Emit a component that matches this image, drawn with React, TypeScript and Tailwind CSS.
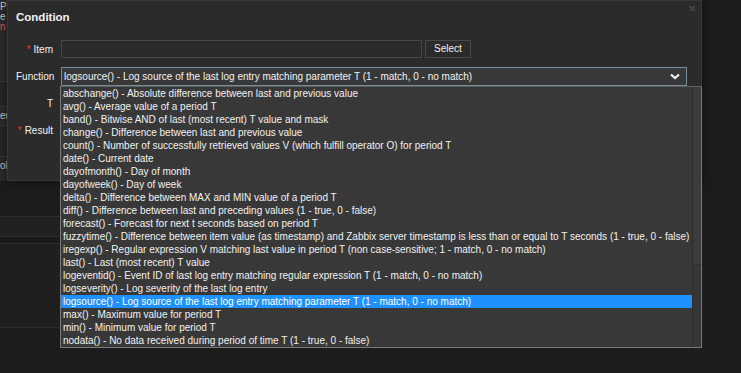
import React from 'react';

const functions = [
  'abschange() - Absolute difference between last and previous value',
  'avg() - Average value of a period T',
  'band() - Bitwise AND of last (most recent) T value and mask',
  'change() - Difference between last and previous value',
  'count() - Number of successfully retrieved values V (which fulfill operator O) for period T',
  'date() - Current date',
  'dayofmonth() - Day of month',
  'dayofweek() - Day of week',
  'delta() - Difference between MAX and MIN value of a period T',
  'diff() - Difference between last and preceding values (1 - true, 0 - false)',
  'forecast() - Forecast for next t seconds based on period T',
  'fuzzytime() - Difference between item value (as timestamp) and Zabbix server timestamp is less than or equal to T seconds (1 - true, 0 - false)',
  'iregexp() - Regular expression V matching last value in period T (non case-sensitive; 1 - match, 0 - no match)',
  'last() - Last (most recent) T value',
  'logeventid() - Event ID of last log entry matching regular expression T (1 - match, 0 - no match)',
  'logseverity() - Log severity of the last log entry',
  'logsource() - Log source of the last log entry matching parameter T (1 - match, 0 - no match)',
  'max() - Maximum value for period T',
  'min() - Minimum value for period T',
  'nodata() - No data received during period of time T (1 - true, 0 - false)',
];

const selected = 'logsource() - Log source of the last log entry matching parameter T (1 - match, 0 - no match)';

const Label: React.FC<{ text: string; required?: boolean }> = ({ text, required }) => (
  <div className="w-[45px] shrink-0 text-right text-[10px] text-[#f2f2f2]">
    {required && <span className="text-[#e33734] mr-[3px]">*</span>}
    {text}
  </div>
);

// the page behind the modal, only its edges show
const BackgroundPage = () => (
  <div className="flex flex-col w-[660px]">
    <div className="h-[82px] bg-[#2b2b2b] border-b border-[#383838] flex flex-col pt-[2px] text-[10px] leading-[10px]">
      <span className="text-[#c9c9c9]">P1</span>
      <span className="text-[#c9c9c9]">e</span>
      <span className="text-[#e45959]">n</span>
    </div>
    <div className="h-[25px] bg-[#262626] border-b border-[#383838]" />
    <div className="h-[19px] bg-[#2b2b2b] border-b border-[#383838] text-[10px] leading-[18px] text-[#c9c9c9]">
      er
    </div>
    <div className="h-[31px] bg-[#262626] border-b border-[#383838]" />
    <div className="h-[24px] bg-[#2b2b2b] text-[10px] leading-[18px] text-[#c9c9c9]">ol</div>
    <div className="h-[36px] bg-[#1c1c1c] border-b border-[#2c2c2c]" />
    <div className="h-[20px] bg-[#212121] border-b border-[#2c2c2c]" />
    <div className="h-[7px] bg-[#1a1a1a] border-b border-[#2c2c2c]" />
    <div className="h-[84px] bg-[#1f1f1f] border-b border-[#2c2c2c]" />
  </div>
);

export default function App() {
  return (
    <div
      className="relative w-[741px] h-[373px] overflow-hidden bg-[#1c1c1c]"
      style={{ fontFamily: '"Liberation Sans", Arial, sans-serif' }}
    >
      <BackgroundPage />

      {/* modal */}
      <div className="absolute left-[7px] top-0 w-[695px] h-[181px] bg-[#2b2b2b] border border-[#383838] shadow-[0_0_10px_rgba(0,0,0,0.5)]">
        <div className="flex items-center justify-between h-[34px] pl-[8px] pr-[5px]">
          <span className="text-[11.5px] font-bold text-[#f2f2f2]">Condition</span>
          <span className="self-start mt-[1px] text-[13px] leading-[13px] text-[#555555]">×</span>
        </div>

        <div className="flex flex-col gap-[9px] pt-[5px]">
          <div className="flex items-center gap-[8px] h-[18px]">
            <Label text="Item" required />
            <div className="w-[361px] h-[18px] bg-[#2b2b2b] border border-[#474747]" />
            <button className="h-[18px] w-[46px] ml-[-5px] border border-[#474747] bg-[#2b2b2b] text-[10px] text-[#f2f2f2] leading-[16px]">
              Select
            </button>
          </div>

          <div className="flex items-center gap-[8px] h-[18px]">
            <div className="w-[45px] shrink-0 pl-[8px] text-[10px] text-[#f2f2f2]">Function</div>
            <div className="w-[626px] h-[19px] flex items-center justify-between bg-[#383838] border border-[#768d99] pl-[2px] pr-[6px]">
              <span className="text-[10px] text-[#f2f2f2] whitespace-nowrap">{selected}</span>
              <svg width="10" height="7" viewBox="0 0 10 7">
                <polyline points="1,1.5 5,5 9,1.5" fill="none" stroke="#f2f2f2" strokeWidth="2.2" />
              </svg>
            </div>
          </div>

          <div className="flex items-center gap-[8px] h-[18px]">
            <Label text="T" />
          </div>

          <div className="flex items-center gap-[8px] h-[18px]">
            <Label text="Result" required />
          </div>
        </div>
      </div>

      {/* open select list */}
      <div className="absolute left-[60px] top-[86px] w-[642px] flex bg-[#383838] border border-[#7a7a7a] border-t-[#5f5f5f]">
        <ul className="flex-1 flex flex-col">
          {functions.map((f) => (
            <li
              key={f}
              className={
                f === selected
                  ? 'h-[13px] leading-[13px] pl-[2px] text-[10px] whitespace-nowrap bg-[#1e90ff] text-white'
                  : 'h-[13px] leading-[13px] pl-[2px] text-[10px] whitespace-nowrap text-[#f2f2f2]'
              }
            >
              {f}
            </li>
          ))}
        </ul>
        <div className="w-[9px] shrink-0 border-l border-[#2c2c2c] bg-[#363636] flex flex-col">
          <div className="h-[178px] bg-[#3c3c3c] border-b border-[#2c2c2c]" />
        </div>
      </div>
    </div>
  );
}
